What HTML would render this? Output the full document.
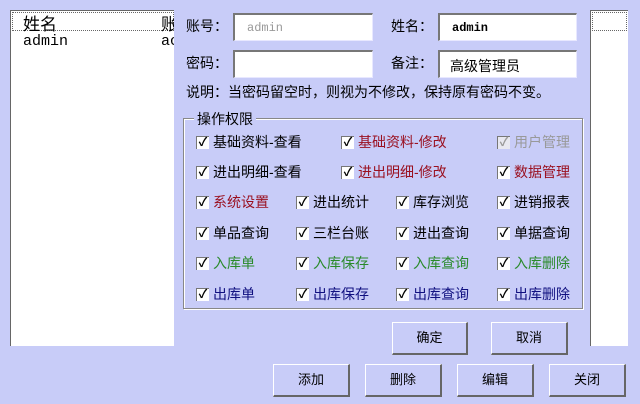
<!DOCTYPE html>
<html><head><meta charset="utf-8"><style>
*{margin:0;padding:0;box-sizing:border-box}
body{width:640px;height:404px;background:#c8ccf8;position:relative;overflow:hidden;font-family:"Liberation Sans","Noto Sans CJK SC",sans-serif;font-size:13px;color:#000}
.a{position:absolute;white-space:nowrap}
.list{position:absolute;background:#fff;border-left:1px solid #666;border-top:1px solid #666}
.inp{position:absolute;background:#fff;border-top:2px solid #777;border-left:2px solid #777;border-bottom:1px solid #e8e8ff;border-right:1px solid #e8e8ff;height:28px}
.btn{position:absolute;background:#c8ccf8;border-top:1px solid #fff;border-left:1px solid #fff;border-right:2px solid #666;border-bottom:2px solid #666;text-align:center;font-size:13px;line-height:29px}
.cb{position:absolute;width:13px;height:13px;background:#fff;border-top:1px solid #777;border-left:1px solid #777;font-size:12px;line-height:11px;text-align:center;font-weight:bold}
.lb{position:absolute;white-space:nowrap;font-size:14px;line-height:17px}
.r{color:#9a1020}.g{color:#2a8a2a}.b{color:#101080}.gr{color:#999}
</style></head><body>
<div class="list" style="left:10px;top:10px;width:164px;height:336px">
<div class="a" style="left:1px;top:1px;width:162px;height:19px;border:1px dotted #666"></div>
<div class="a" style="left:12px;top:-1px;font-size:17px">姓名</div>
<div class="a" style="left:12px;top:22px;font-family:'Liberation Mono',monospace;font-size:15px">admin</div>
<div class="a" style="left:150px;top:-1px;font-size:17px">账</div>
<div class="a" style="left:150px;top:22px;font-family:'Liberation Mono',monospace;font-size:15px">ac</div>
</div>
<div class="list" style="left:590px;top:10px;width:38px;height:336px">
<div class="a" style="left:1px;top:1px;width:35px;height:19px;border:1px dotted #666"></div>
</div>
<div class="a" style="left:174px;top:0;width:416px;height:360px;background:#c8ccf8"></div>
<div class="a" style="left:186px;top:16px;font-size:14px">账号：</div>
<div class="inp" style="left:233px;top:13px;width:140px"><span class="a" style="left:12px;top:6px;color:#999;font-family:'Liberation Mono',monospace;font-size:12px">admin</span></div>
<div class="a" style="left:391px;top:16px;font-size:14px">姓名：</div>
<div class="inp" style="left:438px;top:13px;width:139px"><span class="a" style="left:12px;top:6px;font-family:'Liberation Mono',monospace;font-size:12px;font-weight:bold">admin</span></div>
<div class="a" style="left:186px;top:53px;font-size:14px">密码：</div>
<div class="inp" style="left:233px;top:50px;width:140px"></div>
<div class="a" style="left:391px;top:53px;font-size:14px">备注：</div>
<div class="inp" style="left:438px;top:50px;width:139px"><span class="a" style="left:10px;top:4px;font-size:14px">高级管理员</span></div>
<div class="a" style="left:186px;top:82px;font-size:14px">说明：当密码留空时，则视为不修改，保持原有密码不变。</div>
<div class="a" style="left:183px;top:118px;width:400px;height:191px;border:1px solid #888;box-shadow:1px 1px 0 #fff inset,1px 1px 0 #fff"></div>
<div class="a" style="left:194px;top:109px;background:#c8ccf8;padding:0 3px;font-size:14px">操作权限</div>

<div class="cb" style="left:196px;top:136px">✓</div><div class="lb" style="left:213px;top:134px">基础资料-查看</div>
<div class="cb" style="left:341px;top:136px">✓</div><div class="lb r" style="left:358px;top:134px">基础资料-修改</div>
<div class="cb gr" style="left:497px;top:136px;background:#e8e8f0">✓</div><div class="lb gr" style="left:514px;top:134px">用户管理</div>

<div class="cb" style="left:196px;top:166px">✓</div><div class="lb" style="left:213px;top:164px">进出明细-查看</div>
<div class="cb" style="left:341px;top:166px">✓</div><div class="lb r" style="left:358px;top:164px">进出明细-修改</div>
<div class="cb" style="left:497px;top:166px">✓</div><div class="lb r" style="left:514px;top:164px">数据管理</div>

<div class="cb" style="left:196px;top:196px">✓</div><div class="lb r" style="left:213px;top:194px">系统设置</div>
<div class="cb" style="left:296px;top:196px">✓</div><div class="lb" style="left:313px;top:194px">进出统计</div>
<div class="cb" style="left:396px;top:196px">✓</div><div class="lb" style="left:413px;top:194px">库存浏览</div>
<div class="cb" style="left:497px;top:196px">✓</div><div class="lb" style="left:514px;top:194px">进销报表</div>

<div class="cb" style="left:196px;top:227px">✓</div><div class="lb" style="left:213px;top:225px">单品查询</div>
<div class="cb" style="left:296px;top:227px">✓</div><div class="lb" style="left:313px;top:225px">三栏台账</div>
<div class="cb" style="left:396px;top:227px">✓</div><div class="lb" style="left:413px;top:225px">进出查询</div>
<div class="cb" style="left:497px;top:227px">✓</div><div class="lb" style="left:514px;top:225px">单据查询</div>

<div class="cb" style="left:196px;top:257px">✓</div><div class="lb g" style="left:213px;top:255px">入库单</div>
<div class="cb" style="left:296px;top:257px">✓</div><div class="lb g" style="left:313px;top:255px">入库保存</div>
<div class="cb" style="left:396px;top:257px">✓</div><div class="lb g" style="left:413px;top:255px">入库查询</div>
<div class="cb" style="left:497px;top:257px">✓</div><div class="lb g" style="left:514px;top:255px">入库删除</div>

<div class="cb" style="left:196px;top:288px">✓</div><div class="lb b" style="left:213px;top:286px">出库单</div>
<div class="cb" style="left:296px;top:288px">✓</div><div class="lb b" style="left:313px;top:286px">出库保存</div>
<div class="cb" style="left:396px;top:288px">✓</div><div class="lb b" style="left:413px;top:286px">出库查询</div>
<div class="cb" style="left:497px;top:288px">✓</div><div class="lb b" style="left:514px;top:286px">出库删除</div>

<div class="btn" style="left:392px;top:322px;width:76px;height:33px">确定</div>
<div class="btn" style="left:491px;top:322px;width:77px;height:33px">取消</div>
<div class="btn" style="left:273px;top:364px;width:77px;height:33px">添加</div>
<div class="btn" style="left:365px;top:364px;width:77px;height:33px">删除</div>
<div class="btn" style="left:457px;top:364px;width:77px;height:33px">编辑</div>
<div class="btn" style="left:549px;top:364px;width:77px;height:33px">关闭</div>
</body></html>
